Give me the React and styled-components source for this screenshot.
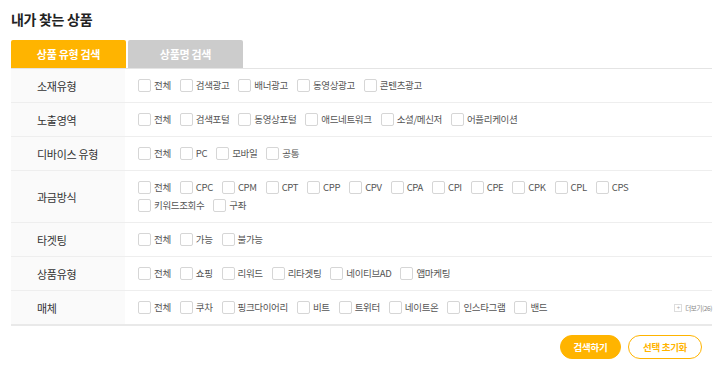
import React from 'react'
import styled, { createGlobalStyle } from 'styled-components'

const GlobalStyle = createGlobalStyle`
  body {
    margin: 0;
    background: #fff;
    font-family: "Noto Sans CJK KR", "Noto Sans", sans-serif;
  }
`

const ORANGE = '#ffb400'

const Wrap = styled.div`
  width: 720px;
  height: 367px;
  box-sizing: border-box;
  padding: 9px 8px 0 11px;
`

const Title = styled.h2`
  margin: 0;
  font-size: 14px;
  line-height: 20px;
  font-weight: 700;
  color: #222;
  letter-spacing: -0.3px;
`

const Tabs = styled.div`
  display: flex;
  gap: 2px;
  margin-top: 11px;
`

const Tab = styled.div`
  width: 115px;
  height: 28px;
  display: flex;
  align-items: center;
  justify-content: center;
  border-radius: 2px 2px 0 0;
  background: ${p => (p.$active ? ORANGE : '#cccccc')};
  color: #fff;
  font-size: 11px;
  font-weight: 700;
  letter-spacing: -0.3px;
`

const Table = styled.div`
  border-top: 1px solid #e4e4e4;
  border-bottom: 2px solid #e9e9e9;
`

const Row = styled.div`
  display: flex;
  min-height: 33px;
  & + & {
    border-top: 1px solid #eeeeee;
  }
`

const Label = styled.div`
  width: 114px;
  flex-shrink: 0;
  display: flex;
  align-items: center;
  padding-left: 26px;
  box-sizing: border-box;
  background: #fafafa;
  font-size: 11px;
  color: #333;
  letter-spacing: -0.3px;
`

const Options = styled.div`
  flex: 1;
  display: flex;
  flex-direction: column;
  justify-content: center;
  gap: 5px;
  padding: 10px 0 10px 13px;
  position: relative;
`

const Line = styled.div`
  display: flex;
  align-items: center;
`

const Option = styled.label`
  display: flex;
  align-items: center;
  margin-right: 9px;
  font-size: 9.5px;
  line-height: 13px;
  color: #555;
  letter-spacing: -0.35px;
`

const Box = styled.span`
  width: 11px;
  height: 11px;
  border: 1px solid #d6d6d6;
  border-radius: 2px;
  background: #fff;
  margin-right: 3px;
  flex-shrink: 0;
`

const More = styled.span`
  position: absolute;
  right: 0;
  top: 50%;
  transform: translateY(-50%);
  display: flex;
  align-items: center;
  gap: 3px;
  font-size: 6.5px;
  color: #888;
  letter-spacing: -0.4px;
  white-space: nowrap;
`

const PlusBox = styled.span`
  width: 6px;
  height: 6px;
  border: 1px solid #ddd;
  font-size: 6px;
  line-height: 6px;
  text-align: center;
  color: #aaa;
`

const Buttons = styled.div`
  display: flex;
  justify-content: flex-end;
  gap: 7px;
  margin-top: 9px;
  padding-right: 10px;
`

const Button = styled.button`
  height: 24px;
  padding: 0;
  width: ${p => (p.$outline ? '74px' : '61px')};
  border-radius: 12px;
  border: 1px solid ${ORANGE};
  background: ${p => (p.$outline ? '#fff' : ORANGE)};
  color: ${p => (p.$outline ? ORANGE : '#fff')};
  font-family: inherit;
  font-size: 9.5px;
  font-weight: 700;
  letter-spacing: -0.3px;
`

const rows = [
  { label: '소재유형', lines: [['전체', '검색광고', '배너광고', '동영상광고', '콘텐츠광고']] },
  { label: '노출영역', lines: [['전체', '검색포털', '동영상포털', '애드네트워크', '소셜/메신저', '어플리케이션']] },
  { label: '디바이스 유형', lines: [['전체', 'PC', '모바일', '공통']] },
  {
    label: '과금방식',
    lines: [
      ['전체', 'CPC', 'CPM', 'CPT', 'CPP', 'CPV', 'CPA', 'CPI', 'CPE', 'CPK', 'CPL', 'CPS'],
      ['키워드조회수', '구좌'],
    ],
  },
  { label: '타겟팅', lines: [['전체', '가능', '불가능']] },
  { label: '상품유형', lines: [['전체', '쇼핑', '리워드', '리타겟팅', '네이티브AD', '앱마케팅']] },
  { label: '매체', lines: [['전체', '쿠차', '핑크다이어리', '비트', '트위터', '네이트온', '인스타그램', '밴드']], more: 26 },
]

export default function App() {
  return (
    <>
      <GlobalStyle />
      <Wrap>
        <Title>내가 찾는 상품</Title>
        <Tabs>
          <Tab $active>상품 유형 검색</Tab>
          <Tab>상품명 검색</Tab>
        </Tabs>
        <Table>
          {rows.map(row => (
            <Row key={row.label}>
              <Label>{row.label}</Label>
              <Options>
                {row.lines.map((line, i) => (
                  <Line key={i}>
                    {line.map(opt => (
                      <Option key={opt}>
                        <Box />
                        {opt}
                      </Option>
                    ))}
                  </Line>
                ))}
                {row.more && (
                  <More>
                    <PlusBox>+</PlusBox>더보기({row.more})
                  </More>
                )}
              </Options>
            </Row>
          ))}
        </Table>
        <Buttons>
          <Button>검색하기</Button>
          <Button $outline>선택 초기화</Button>
        </Buttons>
      </Wrap>
    </>
  )
}
